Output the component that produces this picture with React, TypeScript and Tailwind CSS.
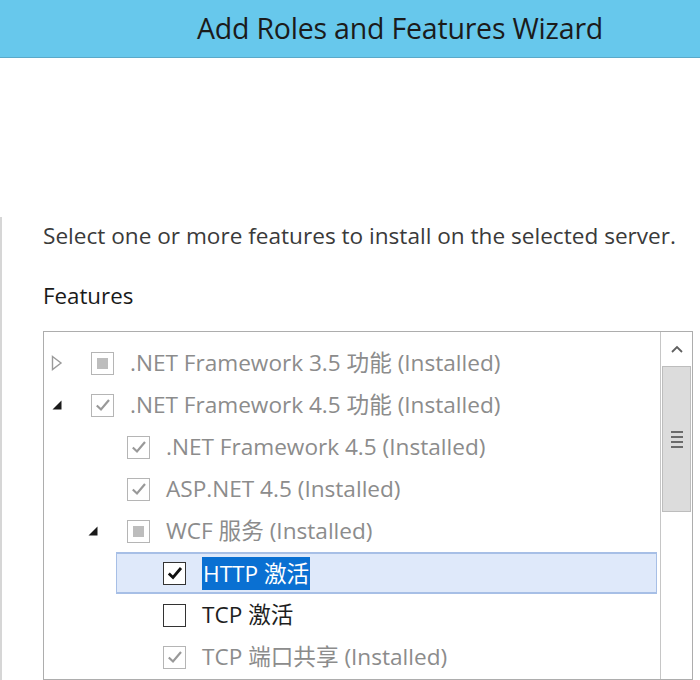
import React from "react";

type Row = {
  level: number;
  expander?: "closed" | "open";
  check: "partial" | "checked" | "empty";
  disabled: boolean;
  label: string;
  selected?: boolean;
};

const rows: Row[] = [
  { level: 0, expander: "closed", check: "partial", disabled: true, label: ".NET Framework 3.5 功能 (Installed)" },
  { level: 0, expander: "open", check: "checked", disabled: true, label: ".NET Framework 4.5 功能 (Installed)" },
  { level: 1, check: "checked", disabled: true, label: ".NET Framework 4.5 (Installed)" },
  { level: 1, check: "checked", disabled: true, label: "ASP.NET 4.5 (Installed)" },
  { level: 1, expander: "open", check: "partial", disabled: true, label: "WCF 服务 (Installed)" },
  { level: 2, check: "checked", disabled: false, label: "HTTP 激活", selected: true },
  { level: 2, check: "empty", disabled: false, label: "TCP 激活" },
  { level: 2, check: "checked", disabled: true, label: "TCP 端口共享 (Installed)" },
];

const indentClass = ["ml-0", "ml-[36px]", "ml-[72px]"];

function Expander({ kind }: { kind?: "closed" | "open" }) {
  return (
    <div className="w-[46px] h-full flex items-center pl-[6px] shrink-0">
      {kind === "closed" && (
        <svg width="12" height="16" viewBox="0 0 12 16">
          <path d="M1.5 1.5 L10 8 L1.5 14.5 Z" fill="none" stroke="#9a9a9a" strokeWidth="1.4" />
        </svg>
      )}
      {kind === "open" && (
        <svg width="12" height="12" viewBox="0 0 12 12">
          <path d="M10.5 1.5 L10.5 10.5 L1.5 10.5 Z" fill="#1a1a1a" />
        </svg>
      )}
    </div>
  );
}

function CheckBox({ state, disabled }: { state: Row["check"]; disabled: boolean }) {
  const border = disabled ? "border-[#b5b5b5]" : "border-[#333333]";
  return (
    <div className={`w-[23px] h-[23px] border-[1.5px] ${border} bg-white flex items-center justify-center shrink-0`}>
      {state === "partial" && <div className="w-[11px] h-[11px] bg-[#bdbdbd]" />}
      {state === "checked" && (
        <svg width="18" height="18" viewBox="0 0 18 18">
          <path
            d="M2.8 9.5 L7 13.5 L15 4"
            fill="none"
            stroke={disabled ? "#999999" : "#111111"}
            strokeWidth={disabled ? "2.2" : "2.8"}
          />
        </svg>
      )}
    </div>
  );
}

function TreeRow({ row }: { row: Row }) {
  const sel = row.selected
    ? "bg-[#dfe9fa] border-y-[2px] border-x border-[#a7bfe6] mr-[3px]"
    : "border border-transparent";
  return (
    <div className={`${indentClass[row.level]} h-[42px] flex items-center ${sel}`}>
      <Expander kind={row.expander} />
      <CheckBox state={row.check} disabled={row.disabled} />
      <div className="ml-[16px] flex items-center whitespace-nowrap">
        {row.selected ? (
          <span className="bg-[#0a70d2] text-white px-[1px] leading-[33px] h-[33px]">{row.label}</span>
        ) : (
          <span className={row.disabled ? "text-[#8c8c8c]" : "text-[#1e1e1e]"}>{row.label}</span>
        )}
      </div>
    </div>
  );
}

export default function App() {
  return (
    <div
      className="w-[700px] h-[680px] overflow-hidden bg-white flex flex-col"
      style={{ fontFamily: '"Open Sans", "Noto Sans CJK SC", sans-serif' }}
    >
      <div className="h-[58px] shrink-0 bg-[#67c8ec] border-b border-[#5aa9c9] flex items-center justify-center pl-[100px]">
        <span className="text-[28.5px] text-[#1b1b1b] tracking-[-0.2px] whitespace-nowrap">Add Roles and Features Wizard</span>
      </div>
      <div className="h-[159px] shrink-0" />
      <div className="flex-1 border-l-[2px] border-[#d6d6d6] pl-[41px] pt-[5px] flex flex-col">
        <div className="text-[22.6px] text-[#3a3a3a] leading-[28px] whitespace-nowrap">
          Select one or more features to install on the selected server.
        </div>
        <div className="mt-[32px] text-[22.3px] text-[#1a1a1a] leading-[28px]">Features</div>
        <div className="mt-[21px] mr-[7px] flex-1 border border-[#adadad] flex">
          <div className="flex-1 pt-[10px] text-[22.6px] overflow-hidden">
            {rows.map((r, i) => (
              <TreeRow key={i} row={r} />
            ))}
          </div>
          <div className="w-[32px] border-l border-[#c6c6c6] flex flex-col shrink-0">
            <div className="h-[34px] flex items-center justify-center">
              <svg width="14" height="10" viewBox="0 0 14 10">
                <path d="M2 8 L7 3 L12 8" fill="none" stroke="#606060" strokeWidth="1.8" />
              </svg>
            </div>
            <div className="h-[146px] mx-[1px] bg-[#dcdcdc] border border-[#bdbdbd] flex items-center justify-center">
              <div className="flex flex-col gap-[3px]">
                <div className="w-[12px] h-[2px] bg-[#6b6b6b]" />
                <div className="w-[12px] h-[2px] bg-[#6b6b6b]" />
                <div className="w-[12px] h-[2px] bg-[#6b6b6b]" />
                <div className="w-[12px] h-[2px] bg-[#6b6b6b]" />
              </div>
            </div>
          </div>
        </div>
      </div>
    </div>
  );
}
